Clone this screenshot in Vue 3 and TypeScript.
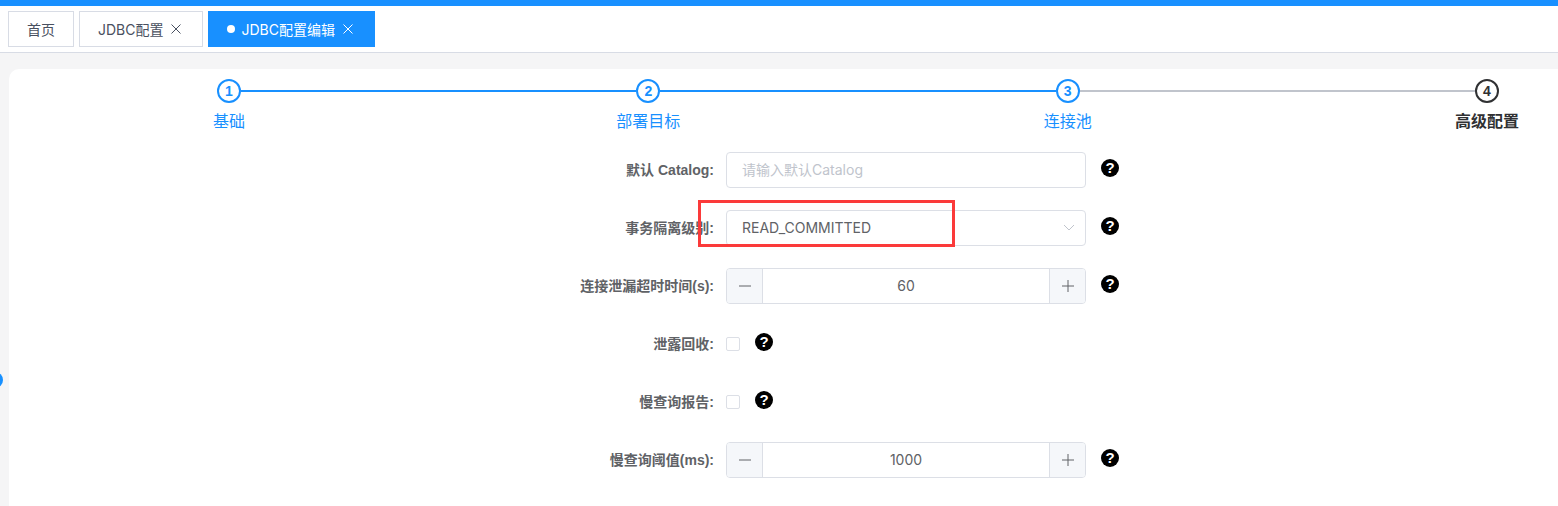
<script setup lang="ts">
interface Step {
  no: number
  title: string
  done: boolean
}

interface Tab {
  title: string
  closable: boolean
  active: boolean
}

const tabs: Tab[] = [
  { title: '首页', closable: false, active: false },
  { title: 'JDBC配置', closable: true, active: false },
  { title: 'JDBC配置编辑', closable: true, active: true },
]

const steps: Step[] = [
  { no: 1, title: '基础', done: true },
  { no: 2, title: '部署目标', done: true },
  { no: 3, title: '连接池', done: true },
  { no: 4, title: '高级配置', done: false },
]
</script>

<template>
  <div class="page">
    <div class="top-line"></div>
    <div class="tabs">
      <div v-for="tab in tabs" :key="tab.title" class="tab" :class="{ active: tab.active }">
        <span v-if="tab.active" class="dot"></span>
        <span>{{ tab.title }}</span>
        <svg v-if="tab.closable" class="close" viewBox="0 0 10 10">
          <path d="M0.5 0.5L9.5 9.5M9.5 0.5L0.5 9.5" />
        </svg>
      </div>
    </div>

    <div class="main">
      <span class="side-dot"></span>
      <div class="card">
        <div class="steps">
          <div class="step-line">
            <template v-for="(step, i) in steps" :key="step.no">
              <span class="circle" :class="{ done: step.done }">{{ step.no }}</span>
              <span v-if="i < steps.length - 1" class="bar" :class="{ done: steps[i + 1].done }"></span>
            </template>
          </div>
          <div class="step-titles">
            <span v-for="step in steps" :key="step.no" class="step-title" :class="{ done: step.done }">{{ step.title }}</span>
          </div>
        </div>

        <div class="form">
          <div class="row">
            <label class="label">默认 Catalog:</label>
            <div class="control input placeholder">请输入默认Catalog</div>
            <span class="help">?</span>
          </div>

          <div class="row">
            <label class="label">事务隔离级别:</label>
            <div class="control input">
              <span>READ_COMMITTED</span>
              <svg class="arrow" viewBox="0 0 12 7">
                <path d="M1 1L6 6L11 1" />
              </svg>
            </div>
            <span class="help">?</span>
            <div class="mark"></div>
          </div>

          <div class="row">
            <label class="label">连接泄漏超时时间(s):</label>
            <div class="control number">
              <span class="num-btn"><svg viewBox="0 0 12 12"><path d="M0 6H12" /></svg></span>
              <span class="num-value">60</span>
              <span class="num-btn"><svg viewBox="0 0 12 12"><path d="M0 6H12M6 0V12" /></svg></span>
            </div>
            <span class="help">?</span>
          </div>

          <div class="row">
            <label class="label">泄露回收:</label>
            <span class="check"></span>
            <span class="help">?</span>
          </div>

          <div class="row">
            <label class="label">慢查询报告:</label>
            <span class="check"></span>
            <span class="help">?</span>
          </div>

          <div class="row">
            <label class="label">慢查询阈值(ms):</label>
            <div class="control number">
              <span class="num-btn"><svg viewBox="0 0 12 12"><path d="M0 6H12" /></svg></span>
              <span class="num-value">1000</span>
              <span class="num-btn"><svg viewBox="0 0 12 12"><path d="M0 6H12M6 0V12" /></svg></span>
            </div>
            <span class="help">?</span>
          </div>
        </div>
      </div>
    </div>
  </div>
</template>

<style>
html,
body {
  margin: 0;
  overflow: hidden;
}
</style>

<style scoped>
.page {
  height: 506px;
  display: flex;
  flex-direction: column;
  background: #f5f5f6;
  font-family: Inter, "Noto Sans CJK SC", sans-serif;
  overflow: hidden;
}

.top-line {
  height: 6px;
  background: #1890ff;
}

.tabs {
  height: 46px;
  display: flex;
  align-items: center;
  gap: 5px;
  padding-left: 8px;
  background: #fff;
  border-bottom: 1px solid #d8dce5;
}

.tab {
  height: 36px;
  box-sizing: border-box;
  display: flex;
  align-items: center;
  padding: 0 18px;
  background: #fff;
  border: 1px solid #d8dce5;
  color: #495060;
  font-size: 14px;
}

.tab:has(.close) {
  padding-right: 21px;
}

.tab.active {
  background: #1890ff;
  border-color: #1890ff;
  color: #fff;
}

.dot {
  width: 8px;
  height: 8px;
  margin-right: 6px;
  border-radius: 50%;
  background: #fff;
}

.close {
  width: 10px;
  height: 10px;
  margin-left: 8px;
  fill: none;
  stroke: currentColor;
  stroke-width: 1;
}

.main {
  position: relative;
  flex: 1;
  padding: 16px 0 0 9px;
}

.side-dot {
  position: absolute;
  left: -13px;
  top: 319px;
  width: 16px;
  height: 16px;
  border-radius: 50%;
  background: #1890ff;
}

.card {
  height: 100%;
  background: #fff;
  border-radius: 10px 0 0 0;
}

.steps {
  padding: 10px 59px 0 208px;
}

.step-line {
  display: flex;
  align-items: center;
}

.circle {
  width: 24px;
  height: 24px;
  box-sizing: border-box;
  flex: none;
  display: flex;
  align-items: center;
  justify-content: center;
  border: 2px solid #303133;
  border-radius: 50%;
  color: #303133;
  font-family: "Liberation Sans", sans-serif;
  font-size: 14px;
  font-weight: 700;
}

.circle.done {
  border-color: #1890ff;
  color: #1890ff;
}

.bar {
  flex: 1;
  height: 2px;
  background: #c0c4cc;
}

.bar.done {
  background: #1890ff;
}

.step-titles {
  display: flex;
  justify-content: space-between;
  margin: 6px -28px 0;
}

.step-title {
  width: 80px;
  text-align: center;
  color: #303133;
  font-size: 16px;
  font-weight: 700;
  line-height: 24px;
}

.step-title.done {
  color: #1890ff;
  font-weight: 400;
}

.form {
  padding-top: 19px;
}

.row {
  position: relative;
  height: 36px;
  margin-bottom: 22px;
  display: flex;
  align-items: center;
}

.label {
  width: 717px;
  box-sizing: border-box;
  padding: 0 12px 2px 0;
  text-align: right;
  color: #606266;
  font-family: "Liberation Sans", "Noto Sans CJK SC", sans-serif;
  font-size: 14px;
  font-weight: 700;
}

.control {
  width: 360px;
  height: 36px;
  box-sizing: border-box;
  display: flex;
  align-items: center;
  border: 1px solid #dcdfe6;
  border-radius: 4px;
  color: #606266;
  font-size: 14px;
}

.input {
  justify-content: space-between;
  padding: 0 10px 2px 15px;
}

.placeholder {
  color: #c0c4cc;
}

.arrow {
  width: 12px;
  height: 7px;
  fill: none;
  stroke: #c0c4cc;
  stroke-width: 1;
}

.num-btn {
  width: 35px;
  height: 100%;
  flex: none;
  display: flex;
  align-items: center;
  justify-content: center;
  background: #f5f7fa;
}

.num-btn:first-child {
  border-right: 1px solid #dcdfe6;
  border-radius: 3px 0 0 3px;
}

.num-btn:last-child {
  border-left: 1px solid #dcdfe6;
  border-radius: 0 3px 3px 0;
}

.num-btn svg {
  width: 12px;
  height: 12px;
  fill: none;
  stroke: #606266;
  stroke-width: 1;
}

.num-value {
  flex: 1;
  padding-bottom: 2px;
  text-align: center;
}

.check {
  width: 14px;
  height: 14px;
  box-sizing: border-box;
  border: 1px solid #dcdfe6;
  border-radius: 2px;
}

.help {
  width: 18px;
  height: 18px;
  margin: -5px 0 0 15px;
  display: flex;
  align-items: center;
  justify-content: center;
  border-radius: 50%;
  background: #000;
  color: #fff;
  font-family: "Liberation Sans", sans-serif;
  font-size: 15px;
  font-weight: 700;
}

.mark {
  position: absolute;
  left: 689px;
  top: -10px;
  width: 257px;
  height: 47px;
  box-sizing: border-box;
  border: 3px solid #fb3a3a;
  pointer-events: none;
}
</style>
